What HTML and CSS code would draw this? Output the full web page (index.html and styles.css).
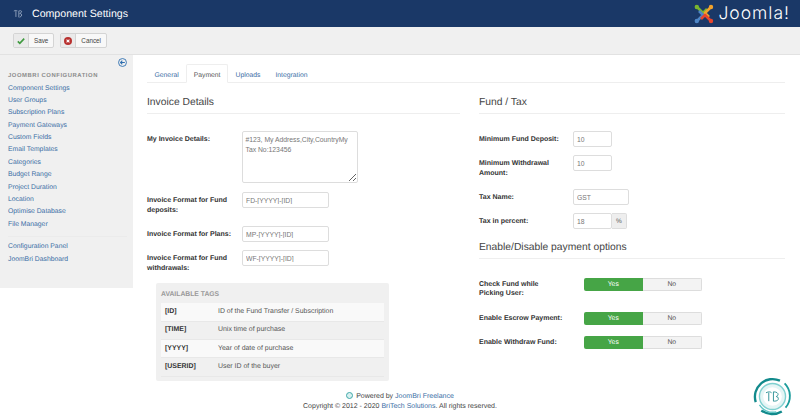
FILE: index.html
```html
<!DOCTYPE html>
<html lang="en">
<head>
    <meta charset="UTF-8">
    <title>Component Settings</title>
    <link rel="stylesheet" href="styles.css">
</head>
<body>
    <header class="navbar">
        <div class="page-title">
            <svg class="title-icon" viewBox="0 0 12 12" width="10" height="10" fill="none" stroke="#9fb0c8" stroke-width="1"><path d="M1 2.500c2-1 3-1 4 0M3.500 2.500v7M6 2l1 1v7M7 2.500c2-1 4-.5 3 1.500L8 5.500c2 0 3 1 2 3L8 10"/></svg>
            <span>Component Settings</span>
        </div>
        <div class="brand">
            <svg class="brand-mark" viewBox="0 0 20 20" width="20" height="20" fill="none" stroke-width="2.600" stroke-linejoin="round">
                <path d="M3 3L9 9l4-4" stroke="#7ab52f"/>
                <path d="M17 3L11 9l4 4" stroke="#f2a22c"/>
                <path d="M3 17L9 11 5 7" stroke="#4e86c6"/>
                <path d="M17 17L11 11l-4 4" stroke="#e8452c"/>
                <circle cx="2.800" cy="3" r="2.200" fill="#7ab52f"/>
                <circle cx="17" cy="3" r="2.200" fill="#f2a22c"/>
                <circle cx="2.800" cy="17" r="2.200" fill="#4e86c6"/>
                <circle cx="17" cy="17" r="2.200" fill="#e8452c"/>
            </svg>
            <span class="brand-name">Joomla!</span>
        </div>
    </header>

    <div class="toolbar">
        <button class="tool-btn" type="button">
            <span class="tool-icon">
                <svg viewBox="0 0 10 10" width="8" height="8" fill="none" stroke="#3f9a3f" stroke-width="2"><path d="M1 5.500l2.500 2.500L9 2"/></svg>
            </span>
            <span class="tool-text">Save</span>
        </button>
        <button class="tool-btn" type="button">
            <span class="tool-icon">
                <svg viewBox="0 0 10 10" width="8" height="8"><circle cx="5" cy="5" r="5" fill="#b8312f"/><path d="M3.200 3.200l3.600 3.600M6.800 3.200l-3.600 3.600" stroke="#fff" stroke-width="1.300"/></svg>
            </span>
            <span class="tool-text">Cancel</span>
        </button>
    </div>

    <div class="main">
        <aside class="sidebar">
            <div class="collapse-row">
                <svg viewBox="0 0 10 10" width="9" height="9" fill="none" stroke="#2f6fb0"><circle cx="5" cy="5" r="4.400"/><path d="M7.600 5H2.800M4.800 3L2.800 5l2 2" stroke-width="1.200"/></svg>
            </div>
            <div class="side-heading">JOOMBRI CONFIGURATION</div>
            <ul class="side-list">
                <li><a href="#">Component Settings</a></li>
                <li><a href="#">User Groups</a></li>
                <li><a href="#">Subscription Plans</a></li>
                <li><a href="#">Payment Gateways</a></li>
                <li><a href="#">Custom Fields</a></li>
                <li><a href="#">Email Templates</a></li>
                <li><a href="#">Categories</a></li>
                <li><a href="#">Budget Range</a></li>
                <li><a href="#">Project Duration</a></li>
                <li><a href="#">Location</a></li>
                <li><a href="#">Optimise Database</a></li>
                <li><a href="#">File Manager</a></li>
            </ul>
            <ul class="side-list side-list-last">
                <li><a href="#">Configuration Panel</a></li>
                <li><a href="#">JoomBri Dashboard</a></li>
            </ul>
        </aside>

        <section class="content">
            <nav class="tabs">
                <a class="tab" href="#">General</a>
                <a class="tab active" href="#">Payment</a>
                <a class="tab" href="#">Uploads</a>
                <a class="tab" href="#">Integration</a>
            </nav>

            <div class="columns">
                <div class="col-left">
                    <h3 class="legend">Invoice Details</h3>
                    <div class="row row-area">
                        <label class="row-label">My Invoice Details:</label>
                        <textarea class="field-area">#123, My Address,City,CountryMy Tax No:123456</textarea>
                    </div>
                    <div class="row row-two">
                        <label class="row-label">Invoice Format for Fund deposits:</label>
                        <input class="field field-format" type="text" value="FD-[YYYY]-[ID]">
                    </div>
                    <div class="row row-one">
                        <label class="row-label">Invoice Format for Plans:</label>
                        <input class="field field-format" type="text" value="MP-[YYYY]-[ID]">
                    </div>
                    <div class="row row-two row-last">
                        <label class="row-label">Invoice Format for Fund withdrawals:</label>
                        <input class="field field-format" type="text" value="WF-[YYYY]-[ID]">
                    </div>

                    <div class="tags">
                        <div class="tags-title">AVAILABLE TAGS</div>
                        <table class="tags-table">
                            <tr><th>[ID]</th><td>ID of the Fund Transfer / Subscription</td></tr>
                            <tr><th>[TIME]</th><td>Unix time of purchase</td></tr>
                            <tr><th>[YYYY]</th><td>Year of date of purchase</td></tr>
                            <tr><th>[USERID]</th><td>User ID of the buyer</td></tr>
                        </table>
                    </div>
                </div>

                <div class="col-right">
                    <h3 class="legend">Fund / Tax</h3>
                    <div class="row row-one">
                        <label class="row-label">Minimum Fund Deposit:</label>
                        <input class="field field-small" type="text" value="10">
                    </div>
                    <div class="row row-two">
                        <label class="row-label">Minimum Withdrawal Amount:</label>
                        <input class="field field-small" type="text" value="10">
                    </div>
                    <div class="row row-one">
                        <label class="row-label">Tax Name:</label>
                        <input class="field field-name" type="text" value="GST">
                    </div>
                    <div class="row row-one">
                        <label class="row-label">Tax in percent:</label>
                        <div class="input-group">
                            <input class="field field-small" type="text" value="18">
                            <span class="addon">%</span>
                        </div>
                    </div>

                    <h3 class="legend legend-second">Enable/Disable payment options</h3>
                    <div class="row row-toggle row-tall">
                        <label class="row-label">Check Fund while<br>Picking User:</label>
                        <div class="toggle"><span class="toggle-yes">Yes</span><span class="toggle-no">No</span></div>
                    </div>
                    <div class="row row-toggle">
                        <label class="row-label">Enable Escrow Payment:</label>
                        <div class="toggle"><span class="toggle-yes">Yes</span><span class="toggle-no">No</span></div>
                    </div>
                    <div class="row row-toggle">
                        <label class="row-label">Enable Withdraw Fund:</label>
                        <div class="toggle"><span class="toggle-yes">Yes</span><span class="toggle-no">No</span></div>
                    </div>
                </div>
            </div>
        </section>
    </div>

    <footer class="footer">
        <div class="powered">
            <span class="powered-dot"></span>Powered by <a href="#">JoomBri Freelance</a>
        </div>
        <div>Copyright © 2012 - 2020 <a href="#">BriTech Solutions</a>. All rights reserved.</div>
    </footer>

    <svg class="seal" viewBox="0 0 44 44" width="41" height="41" fill="none">
        <circle cx="22" cy="22" r="14" fill="#e4f5f5" stroke="#7fd0d0" stroke-width="1.500"/>
        <circle cx="22" cy="22" r="10" fill="#fff"/>
        <path d="M4 28A19 19 0 0 1 30 5" stroke="#128a8c" stroke-width="2.500"/>
        <path d="M35 8A19 19 0 0 1 36 34" stroke="#1c9c9c" stroke-width="2"/>
        <path d="M10 37A20 20 0 0 0 32 38" stroke="#128a8c" stroke-width="2.500"/>
        <path d="M8 31A17 17 0 0 0 26 38.500" stroke="#5cc4c4" stroke-width="1.500"/>
        <path d="M15 18c3-1.500 5-1 6 0M18 18v9M23 17v10c4 0 6-1 5-4l-2-1c3-1 3-5-3-5z" stroke="#2a8f94"/>
    </svg>
</body>
</html>
```

FILE: styles.css
```css
* {
    box-sizing: border-box;
}
html, body {
    height: 100%;
}
body {
    margin: 0;
    position: relative;
    overflow: hidden;
    font-family: "Liberation Sans", Arial, sans-serif;
    font-size: 6.800px;
    line-height: 12px;
    color: #333;
    background-color: #fff;
    text-rendering: geometricPrecision;
}
a {
    color: #3a6ea5;
    text-decoration: none;
}

/* top bar */
.navbar {
    height: 27px;
    display: flex;
    align-items: center;
    justify-content: space-between;
    padding: 0 10px 0 13px;
    background-color: #1a3867;
}
.page-title {
    display: flex;
    align-items: center;
    gap: 9px;
    color: #fff;
    font-size: 10.600px;
}
.brand {
    display: flex;
    align-items: center;
    gap: 4px;
}
.brand-name {
    color: #fff;
    font-family: Inter, sans-serif;
    font-weight: 300;
    font-size: 17.500px;
    letter-spacing: 1px;
}

.toolbar {
    height: 28px;
    display: flex;
    align-items: center;
    gap: 6px;
    padding: 0 13px;
    background-color: #f0f0f0;
    border-bottom: 1px solid #e2e2e2;
}
.tool-btn {
    height: 15px;
    display: flex;
    align-items: center;
    padding: 0;
    font-family: inherit;
    font-size: 6.300px;
    color: #444;
    background-color: #f8f8f8;
    border: 1px solid #d4d4d4;
    border-radius: 2px;
}
.tool-icon {
    width: 15px;
    height: 13px;
    display: flex;
    align-items: center;
    justify-content: center;
    background-color: #eaeaea;
    border-right: 1px solid #d4d4d4;
}
.tool-text {
    padding: 0 5px;
}

.main {
    display: flex;
    align-items: flex-start;
}

/* sidebar */
.sidebar {
    width: 133px;
    height: 233px;
    flex-shrink: 0;
    padding: 3px 6px 0 8px;
    background-color: #f0f0f0;
}
.collapse-row {
    display: flex;
    justify-content: flex-end;
    height: 10px;
}
.side-heading {
    margin-top: 3px;
    color: #8c8c8c;
    font-size: 5.900px;
    font-weight: bold;
    letter-spacing: .55px;
    line-height: 10px;
}
.side-list {
    list-style: none;
    margin: 1.500px 0 0;
    padding: 0 0 5px;
    border-bottom: 1px solid #ebebeb;
}
.side-list li {
    height: 12.400px;
    line-height: 12.400px;
}
.side-list-last {
    margin-top: 4px;
    border-bottom: 0;
}

/* content */
.content {
    flex: 1;
    min-width: 0;
    padding: 9px 15px 0 14px;
}
.tabs {
    display: flex;
    height: 19px;
    border-bottom: 1px solid #eee;
}
.tab {
    height: 19px;
    padding: 4.500px 6.500px 0;
    font-size: 6.800px;
    border: 1px solid transparent;
    border-radius: 2px 2px 0 0;
}
.tab.active {
    color: #555;
    background-color: #fff;
    border-color: #eee #eee #fff;
}
.columns {
    display: grid;
    grid-template-columns: 313px 306px;
    column-gap: 19px;
}
.legend {
    margin: 11px 0 17px;
    height: 20px;
    font-size: 10.300px;
    line-height: 18px;
    font-weight: normal;
    color: #444;
    border-bottom: 1px solid #eee;
}
.legend-second {
    margin-top: 10px;
    margin-bottom: 19px;
}

/* form rows */
.row {
    display: flex;
    align-items: flex-start;
}
.row-label {
    width: 95px;
    flex-shrink: 0;
    padding: 4px 10px 0 0;
    font-weight: bold;
    line-height: 9.500px;
    font-size: 7px;
}
.row-area {
    margin-bottom: 9px;
}
.row-two {
    margin-bottom: 8px;
}
.row-one {
    margin-bottom: 8px;
}
.row-two .field {
    margin-bottom: 10px;
}
.row-last {
    margin-bottom: 0;
}
.col-right .row-label {
    width: 94px;
}
.field, .field-area {
    font-family: inherit;
    font-size: 6.800px;
    color: #777;
    background-color: #fff;
    border: 1px solid #ddd;
    border-radius: 2px;
}
.field {
    height: 16px;
    padding: 0 3px;
}
.field-area {
    width: 116px;
    height: 52px;
    padding: 3px 2.500px;
    line-height: 9.500px;
}
.field-format {
    width: 87px;
}
.field-small {
    width: 39px;
}
.field-name {
    width: 56px;
}
.input-group {
    display: flex;
}
.addon {
    width: 15px;
    height: 16px;
    line-height: 15px;
    text-align: center;
    font-size: 6.500px;
    color: #555;
    background-color: #eee;
    border: 1px solid #ddd;
    border-left: 0;
    border-radius: 0 2px 2px 0;
}

/* yes no toggles */
.row-toggle {
    height: 24px;
}
.row-tall {
    height: 34px;
}
.col-right .row-toggle .row-label {
    width: 105px;
    padding-top: 1.500px;
}
.toggle {
    width: 118px;
    height: 13px;
    display: flex;
    font-size: 6.800px;
    line-height: 13px;
    text-align: center;
    border-radius: 2px;
    overflow: hidden;
}
.toggle-yes {
    flex: 1;
    color: #fff;
    background-color: #46a546;
}
.toggle-no {
    flex: 1;
    color: #555;
    background-color: #f3f3f3;
    border: 1px solid #ddd;
    border-left: 0;
    line-height: 11px;
}

/* available tags */
.tags {
    width: 233px;
    height: 98px;
    margin: 7px 0 0 9px;
    padding: 5px 5px 0;
    background-color: #f0f0f0;
    border-radius: 2px;
}
.tags-title {
    color: #999;
    font-size: 6.800px;
    font-weight: bold;
    line-height: 13px;
    margin-bottom: 2px;
}
.tags-table {
    width: 100%;
    border-collapse: collapse;
    font-size: 6.950px;
}
.tags-table th, .tags-table td {
    height: 18.300px;
    padding: 0 4px;
    text-align: left;
    border-bottom: 1px solid #e8e8e8;
}
.tags-table th {
    width: 53px;
    color: #333;
}
.tags-table td {
    color: #555;
}
.tags-table tr:nth-child(odd) {
    background-color: #f9f9f9;
}

/* footer */
.footer {
    position: absolute;
    left: 0;
    right: 0;
    bottom: 8px;
    text-align: center;
    font-size: 7px;
    line-height: 10px;
    color: #444;
}
.powered-dot {
    display: inline-block;
    width: 7px;
    height: 7px;
    margin-right: 3px;
    vertical-align: -1px;
    border-radius: 50%;
    background-color: #d8f0f0;
    border: 1px solid #3fa9a9;
}
.seal {
    position: absolute;
    right: 7px;
    bottom: 3px;
}
```
